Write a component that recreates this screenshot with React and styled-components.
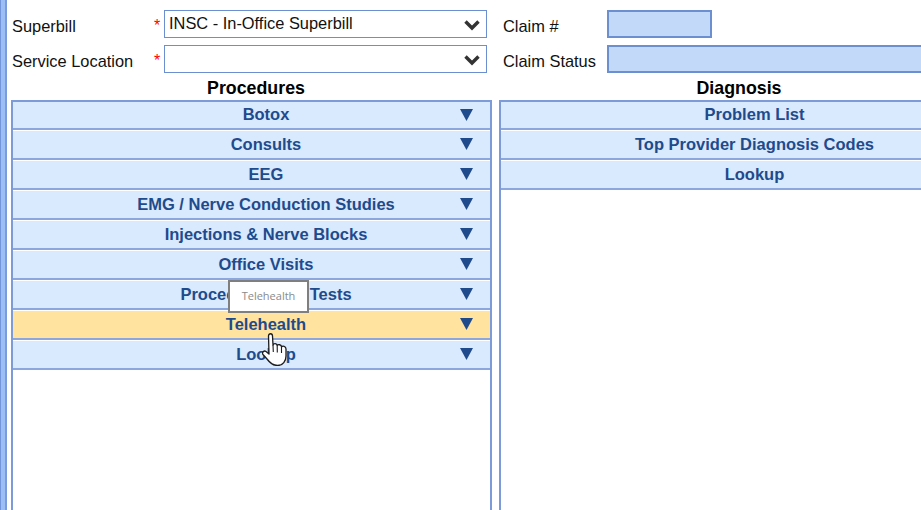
import React from 'react';
import styled, { createGlobalStyle } from 'styled-components';

const Global = createGlobalStyle`
  html, body { margin: 0; padding: 0; background: #fff; overflow: hidden; }
  body { font-family: "Liberation Sans", Arial, sans-serif; }
`;
const Page = styled.div`
  width: 921px; height: 510px; box-sizing: border-box; overflow: hidden;
  position: relative;
  background: linear-gradient(to right, #7396d8 0, #7396d8 1px, #9cc0f5 1px, #9cc0f5 5px, #7a9bdc 5px, #7a9bdc 7px, #fff 7px);
  padding: 10px 0 0 11px;
`;
const FormGrid = styled.div`
  display: grid;
  grid-template-columns: 143px 10px 323px 120px 1fr;
  grid-template-rows: 28px 28px;
  row-gap: 7px;
  width: 910px;
`;
const Label = styled.div`
  font-size: 16.4px; color: #111; line-height: 28px; padding-top: 2px;
  margin-left: ${p => p.$right ? 16 : 1}px;
`;
const Star = styled.div`
  color: #f00; font-size: 16px; line-height: 28px; padding-top: 2px;
`;
const SelectBox = styled.div`
  box-sizing: border-box; height: 28px; width: 323px;
  border: 1px solid #6b8fd0; background: #fff;
  display: flex; align-items: center; justify-content: space-between;
  padding: 0 5px 2px 4px; font-size: 16.4px; color: #111;
`;
const Chevron = styled.svg`width: 18px; height: 12px; margin-top: 4px; flex: none;`;
const ReadOnly = styled.div`
  box-sizing: border-box; height: 28px; background: #c2d9f9;
  border: 2px solid #6b8fd0;
  width: ${p => p.$w};
`;
const Columns = styled.div`
  display: grid; grid-template-columns: 481px 480px; column-gap: 7px; margin-top: 4px;
`;
const Column = styled.div`display: flex; flex-direction: column;`;
const Heading = styled.div`
  box-sizing: border-box;
  font-size: 17.8px; font-weight: 700; color: #000; text-align: center; height: 23px; line-height: 23px;
  padding-left: ${p => p.$shift || 0}px;
`;
const Panel = styled.div`
  box-sizing: border-box; height: 420px;
  border-left: 2px solid #7d9bd8;
  border-right: ${p => p.$open ? 'none' : '2px solid #7d9bd8'};
  position: relative;
`;
const Row = styled.div`
  box-sizing: border-box; height: 30px; position: relative;
  background: ${p => p.$hover ? '#ffe39e' : '#d9e9fe'};
  border-top: 1px solid #fff;
  border-bottom: 2px solid #8ba7dd;
  display: flex; align-items: center; justify-content: center;
  font-size: 16.5px; font-weight: 700; color: #1f4b8c;
  padding-bottom: 1px;
  padding-left: 29px;
  &:first-child { border-top: 2px solid #7d9bd8; }
`;
const Arrow = styled.svg`
  position: absolute; right: 17px; top: 6px; width: 13px; height: 14px;
`;
const Tip = styled.div`
  position: absolute; left: 215px; top: 180px; width: 81px; height: 33px; box-sizing: border-box;
  border: 2px solid #7f7f7f; background: #fff; color: #8a8a8a;
  font: 11px "Open Sans", sans-serif; display: flex; align-items: center; justify-content: center;
  padding-bottom: 2px;
`;
const Cursor = styled.svg`
  position: absolute; left: 249px; top: 233px; width: 25px; height: 33px;
`;

const Tri = () => (
  <Arrow viewBox="0 0 13 14"><path d="M0 1H13L6.500 13Z" fill="#1f4b8c" /></Arrow>
);
const Chev = () => (
  <Chevron viewBox="0 0 18 12">
    <path d="M2.500 2.500L9 9L15.500 2.500" fill="none" stroke="#333" strokeWidth="3.400" />
  </Chevron>
);
const procedures = ['Botox', 'Consults', 'EEG', 'EMG / Nerve Conduction Studies', 'Injections & Nerve Blocks', 'Office Visits', 'Procedures and Tests', 'Telehealth', 'Lookup'];
const diagnosis = ['Problem List', 'Top Provider Diagnosis Codes', 'Lookup'];

export default function App() {
  return (
    <Page>
      <Global />
      <FormGrid>
        <Label>Superbill</Label>
        <Star>*</Star>
        <SelectBox>INSC - In-Office Superbill<Chev /></SelectBox>
        <Label $right>Claim #</Label>
        <ReadOnly $w="105px" />
        <Label>Service Location</Label>
        <Star>*</Star>
        <SelectBox><span /><Chev /></SelectBox>
        <Label $right>Claim Status</Label>
        <ReadOnly $w="320px" />
      </FormGrid>
      <Columns>
        <Column>
          <Heading $shift={9}>Procedures</Heading>
          <Panel>
            {procedures.map(p => (
              <Row key={p} $hover={p === 'Telehealth'}>{p}<Tri /></Row>
            ))}
            <Tip>Telehealth</Tip>
            <Cursor viewBox="0 0 25 33">
              <path d="M6.500 3C6.500 0 10.500 0 10.500 3L11 12C11.500 10 15 10 15.200 12.500C16 11 19.500 11.500 19.500 14C20.500 12.500 24 13 24 16L24 23C24 28 21 32.500 15.500 32.500C11 32.500 8 30 5 26L1 21.500C-.5 19.500 2 17 4 18.500L7 21Z" fill="#fff" stroke="#1c1c1c" strokeWidth="1.300" strokeLinejoin="round" />
              <path d="M11 12L11.300 19M15.200 12.500L15.300 19.500M19.500 14L19.500 20" fill="none" stroke="#1c1c1c" strokeWidth="1.100" />
            </Cursor>
          </Panel>
        </Column>
        <Column>
          <Heading>Diagnosis</Heading>
          <Panel $open>
            {diagnosis.map(p => <Row key={p}>{p}</Row>)}
          </Panel>
        </Column>
      </Columns>
    </Page>
  );
}
